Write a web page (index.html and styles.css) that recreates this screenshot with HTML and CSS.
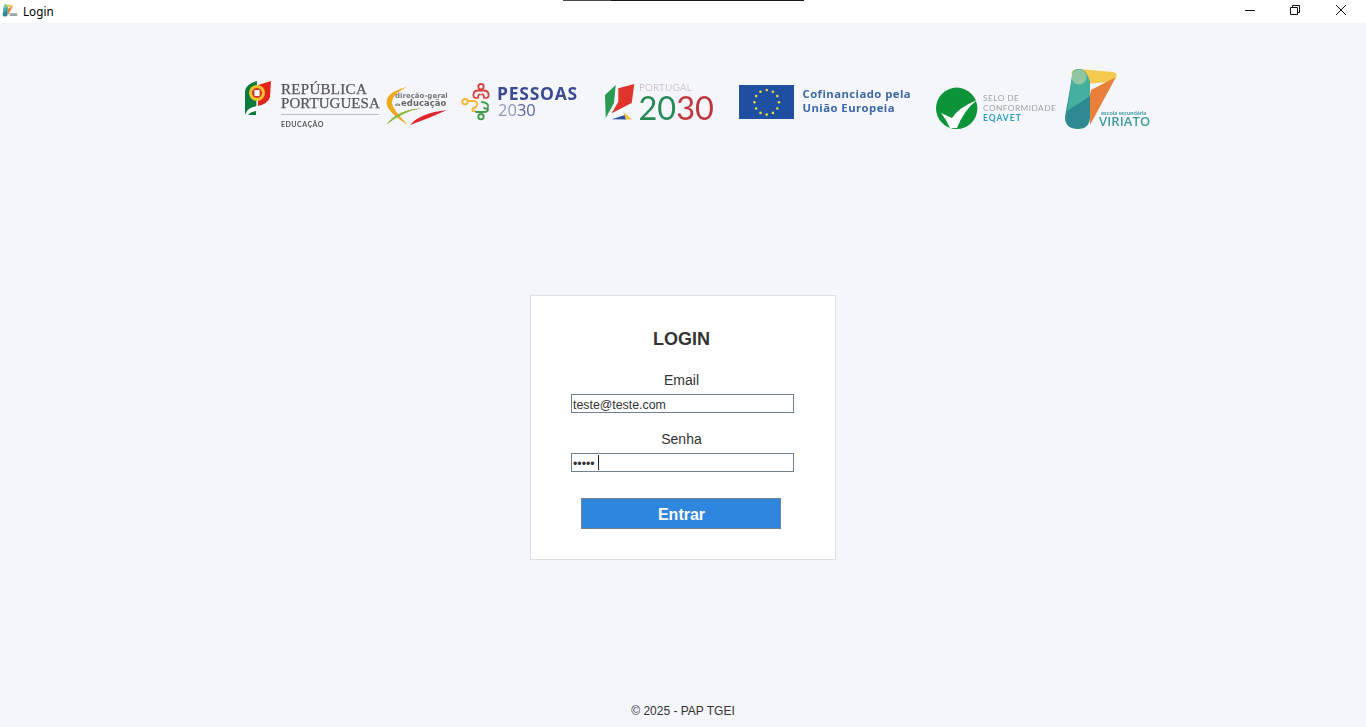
FILE: index.html
```html
<!DOCTYPE html>
<html lang="pt">
<head>
<meta charset="utf-8">
<title>Login</title>
<link rel="stylesheet" href="styles.css">
</head>
<body>
<svg class="defs" width="0" height="0" aria-hidden="true">
  <defs>
    <g id="viriato-mark">
      <path d="M1071 73 Q1073 69 1079 69 L1113 72 Q1118 73 1116 77 L1110 82 L1085 84 Z" fill="#f3c94e"/>
      <path d="M1091 90 L1116 77 L1090 125 L1090 95 Z" fill="#e8803c"/>
      <path d="M1072 77 Q1072 69 1079 69 Q1086 69 1090 82 L1090 118 Q1089 129 1078 129 Q1065 129 1065 117 Z" fill="#2e8a92"/>
      <path d="M1072 77 Q1072 69 1079 69 Q1086 69 1090 82 L1090 96 L1067 111 Z" fill="#45b09f"/>
      <circle cx="1079" cy="77" r="7.5" fill="#8fc7a3"/>
    </g>
  </defs>
</svg>

<header class="titlebar">
  <svg class="app-icon" width="16" height="13" viewBox="1062 66 80 65" aria-hidden="true">
    <use href="#viriato-mark"/>
    <rect x="1100" y="112" width="38" height="14" fill="#9aa8ac"/>
  </svg>
  <span class="window-title">Login</span>
  <div class="window-controls">
    <svg class="win-btn" width="46" height="20" viewBox="0 0 46 20" aria-hidden="true"><path d="M19 10.5H29" stroke="#111" fill="none"/></svg>
    <svg class="win-btn" width="46" height="20" viewBox="0 0 46 20" aria-hidden="true"><path d="M18.5 7.5H25.5V14.5H18.5ZM20.5 7.5V5.5H27.5V12.5H25.5" stroke="#111" fill="none"/></svg>
    <svg class="win-btn" width="46" height="20" viewBox="0 0 46 20" aria-hidden="true"><path d="M18 5L28 15M28 5L18 15" stroke="#111" fill="none"/></svg>
  </div>
</header>
<div class="screen-edge"><span class="screen-edge-part"></span></div>

<main class="page">
  <div class="logos">
    <svg class="logo-strip" width="906" height="64" viewBox="244 67 906 64" role="img" aria-label="Logótipos">
      <!-- República Portuguesa -->
      <path d="M245 91 Q246 84 257 81 L256 115 L245 115 Z" fill="#0b7a3b"/>
      <path d="M258 85 L271 81 L270 97 Q268 104 258 106 Z" fill="#e2231a"/>
      <path d="M245 115 Q247 107 258 106 Q266 105 269 100 Q266 109 256 111 Q250 112 248 115 Z" fill="#fff"/>
      <circle cx="257" cy="93" r="8" fill="#f4c22f"/>
      <circle cx="257" cy="93" r="5" fill="#d8362a"/>
      <rect x="254.5" y="90" width="5" height="6" fill="#fff"/>
      <g class="rp-text">
        <text x="281" y="93.500" class="t-rep">REPÚBLICA</text>
        <text x="281" y="107.500" class="t-rep t-port">PORTUGUESA</text>
      </g>
      <path d="M281 114.500H379" stroke="#bdbdbd" fill="none"/>
      <text x="281" y="126.500" class="t-edu">EDUCAÇÃO</text>

      <!-- DGE -->
      <path d="M407 87 Q386 92 386.500 103 Q387 112 408 125 Q393 110 392 103 Q392 94 407 87 Z" fill="#f0a81e"/>
      <path d="M386 125 Q396 110 422 108 Q402 112 386 125 Z" fill="#8cb63c"/>
      <path d="M410 125 Q420 113 447 110 Q430 118 410 125 Z" fill="#e0252b"/>
      <text x="395" y="98" class="t-dge1">direção-geral</text>
      <text x="395" y="105.700" class="t-dge0">da</text>
      <text x="401" y="105.700" class="t-dge2">educação</text>

      <!-- Pessoas 2030 -->
      <g fill="none" stroke-width="1.800" stroke-linecap="round">
        <g stroke="#d8413a">
          <circle cx="481" cy="86.700" r="2.700"/>
          <path d="M476 98 Q473 98 473.500 94 Q474 90.500 478 90.500 H484 Q488 90.500 488.500 94 Q489 98 486 98 M478 98 Q478 94 480 94.500 M484 98 Q484 94 482 94.500"/>
        </g>
        <g stroke="#f2b632">
          <circle cx="465" cy="101.700" r="2.700"/>
          <path d="M468 101 H474 Q478 101.500 477 105 Q476 108 473 108 Q471 112 475 111"/>
        </g>
        <g stroke="#3f9a4c">
          <circle cx="481" cy="116.700" r="2.700"/>
          <path d="M482 102 Q489 103 488 107 Q487 110 484 108 M476 112 H484 Q488 112 488 109"/>
        </g>
      </g>
      <text x="497" y="100" class="t-pes">PESSOAS</text>
      <text x="498" y="115.700" class="t-pes20">20<tspan class="t-pes30">30</tspan></text>

      <!-- Portugal 2030 -->
      <path d="M605 95 L615.700 85 L614 103 L605.700 118 Z" fill="#2c9a50"/>
      <path d="M618.300 88.300 L634.300 84 L631.700 103 L611.700 113.300 L618.300 101.700 Z" fill="#e0342c"/>
      <path d="M611.700 119.300 L625 115 L626 119.500 Z" fill="#2f4f9f"/>
      <path d="M623.300 111.700 L632 119.500 L626 119.500 Z" fill="#f0c33c"/>
      <text x="639" y="91" class="t-ptg">PORTUGAL</text>
      <text x="638.500" y="119.500" class="t-2030">20<tspan class="t-2030r">30</tspan></text>

      <!-- UE -->
      <rect x="739" y="85" width="55" height="34" fill="#1f4fa0"/>
      <g fill="#e6d84a">
        <circle cx="766.700" cy="90" r="1.300"/><circle cx="772.900" cy="91.700" r="1.300"/><circle cx="777.300" cy="96.100" r="1.300"/>
        <circle cx="779" cy="102.300" r="1.300"/><circle cx="777.300" cy="108.500" r="1.300"/><circle cx="772.900" cy="112.900" r="1.300"/>
        <circle cx="766.700" cy="114.600" r="1.300"/><circle cx="760.500" cy="112.900" r="1.300"/><circle cx="756.100" cy="108.500" r="1.300"/>
        <circle cx="754.400" cy="102.300" r="1.300"/><circle cx="756.100" cy="96.100" r="1.300"/><circle cx="760.500" cy="91.700" r="1.300"/>
      </g>
      <text x="802.500" y="97.700" class="t-eu">Cofinanciado pela</text>
      <text x="802.500" y="111.700" class="t-eu">União Europeia</text>

      <!-- EQAVET -->
      <circle cx="956.700" cy="108.300" r="20.700" fill="#0d9438"/>
      <path d="M941 113 L952 118 Q958 108 977 100 Q964 110 957 128 L950 128 Q946 119 941 113 Z" fill="#fff"/>
      <text x="983" y="100.500" class="t-eq">SELO DE</text>
      <text x="983" y="110.700" class="t-eq">CONFORMIDADE</text>
      <text x="983" y="120.700" class="t-eqb">EQAVET</text>

      <!-- Viriato -->
      <use href="#viriato-mark"/>
      <text x="1101" y="115" class="t-esc">escola secundária</text>
      <text x="1099" y="125.700" class="t-vir">VIRIATO</text>
    </svg>
  </div>

  <form class="card">
    <h1 class="card-title">LOGIN</h1>
    <label class="field-label" for="email">Email</label>
    <input class="field" id="email" type="text" value="teste@teste.com">
    <label class="field-label field-label-next" for="senha">Senha</label>
    <div class="field-wrap">
      <input class="field" id="senha" type="password" value="teste">
      <span class="caret"></span>
    </div>
    <button class="submit" type="button">Entrar</button>
  </form>

  <footer class="footer">© 2025 - PAP TGEI</footer>
</main>
</body>
</html>
```

FILE: styles.css
```css
* { box-sizing: border-box; }

html, body { height: 100%; }

body {
  margin: 0;
  background: #f4f6fb;
  color: #333;
  font-family: "Liberation Sans", Arial, sans-serif;
  overflow: hidden;
  position: relative;
}

.defs { position: absolute; }

.titlebar {
  height: 23px;
  background: #fff;
  display: flex;
  align-items: flex-start;
  padding-left: 2px;
}

.app-icon { margin-top: 4px; }

.window-title {
  margin-left: 5px;
  margin-top: 3px;
  font: 11.7px/16px "Noto Sans", "Open Sans", sans-serif;
  color: #000;
}

.window-controls {
  margin-left: auto;
  display: flex;
  padding-right: 2px;
}

.win-btn { display: block; }

.screen-edge {
  position: absolute;
  top: 0;
  left: 563px;
  width: 241px;
  height: 1px;
  background: #161616;
}

.screen-edge-part {
  display: block;
  width: 48px;
  height: 1px;
  background: #4a4a4a;
}

.page {
  height: 704px;
  display: flex;
  flex-direction: column;
  align-items: center;
}

.logos {
  align-self: stretch;
  padding: 44px 0 0 244px;
  height: 108px;
}

.logo-strip {
  display: block;
  filter: blur(0.5px);
}

.rp-text { fill: #55555a; stroke: #55555a; stroke-width: 0.25px; }
.t-rep { font: 15px "Liberation Serif", serif; letter-spacing: 0.3px; }
.t-port { letter-spacing: 0.05px; }
.t-edu { font: bold 7px "Lato", sans-serif; fill: #555; letter-spacing: 0.5px; }
.t-dge1 { font: bold 7px "DejaVu Sans", sans-serif; fill: #777; letter-spacing: 0.02px; }
.t-dge0 { font: bold 4px "DejaVu Sans", sans-serif; fill: #777; }
.t-dge2 { font: bold 8.4px "DejaVu Sans", sans-serif; fill: #666; letter-spacing: 0.1px; }
.t-pes { font: bold 17.5px "Open Sans", sans-serif; fill: #3a4a93; letter-spacing: 0.75px; }
.t-pes20 { font: 16.5px "Open Sans", sans-serif; fill: #9098c2; }
.t-pes30 { fill: #5a66a8; }
.t-ptg { font: 300 10px "Lato", sans-serif; fill: #b9a9b4; letter-spacing: 0.2px; }
.t-2030 { font: 400 32.5px "Lato", sans-serif; fill: #2a8a55; }
.t-2030r { fill: #c0393f; }
.t-eu { font: bold 11.300px "Open Sans", sans-serif; fill: #3d68a8; letter-spacing: 0.45px; }
.t-eq { font: 8.3px "Lato", sans-serif; fill: #a3a3a3; letter-spacing: 0.45px; }
.t-eqb { font: bold 8.5px "Lato", sans-serif; fill: #2aa0c4; letter-spacing: 1px; }
.t-esc { font: bold 5.8px "Lato", sans-serif; fill: #3d9ba0; }
.t-vir { font: 600 13px "Open Sans", sans-serif; fill: #3d9ba0; letter-spacing: 0.1px; }

.card {
  width: 306px;
  height: 265px;
  margin-top: 164px;
  background: #fff;
  border: 1px solid #dcdfe3;
  padding-top: 33px;
  display: flex;
  flex-direction: column;
  align-items: center;
}

.card-title {
  margin: 0 3px 23px 0;
  font-size: 18px;
  line-height: 20px;
  font-weight: bold;
  color: #333;
}

.field-label {
  margin: 0 3px 5px 0;
  font-size: 14px;
  line-height: 17px;
  color: #333;
}

.field-label-next { margin-top: 18px; }

.field-wrap {
  position: relative;
  height: 19px;
}

.field {
  display: block;
  width: 223px;
  height: 19px;
  margin-right: 1px;
  padding: 2px 1px 0;
  border: 1px solid #708090;
  border-radius: 0;
  outline: 0;
  background: #fff;
  color: #333;
  font: 12.35px "Liberation Sans", Arial, sans-serif;
}

.caret {
  position: absolute;
  left: 27px;
  top: 2px;
  width: 1px;
  height: 15px;
  background: #222;
}

.submit {
  width: 200px;
  height: 31px;
  margin: 26px 4px 0 0;
  padding: 2px 0 0 1px;
  border: 1px solid #708090;
  border-radius: 0;
  background: #2e86de;
  color: #fff;
  font: bold 16px "Liberation Sans", Arial, sans-serif;
}

.footer {
  margin-top: auto;
  padding-bottom: 9px;
  font-size: 12px;
  line-height: 14px;
  color: #333;
}
```
